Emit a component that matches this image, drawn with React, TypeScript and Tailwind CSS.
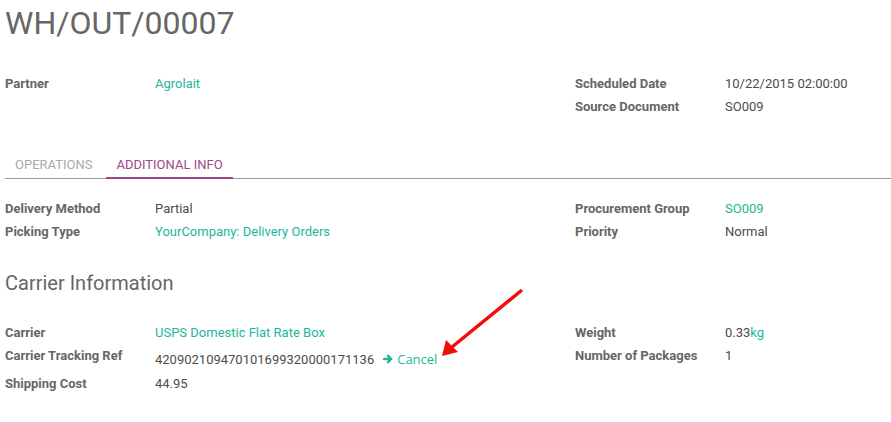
import React from 'react'

const font = { fontFamily: 'Roboto, "Noto Sans", sans-serif' }

type Field = { label: string; value: React.ReactNode; link?: boolean }

function FieldRows({ fields }: { fields: Field[] }) {
  return (
    <div className="grid grid-cols-[150px_1fr] content-start text-[13px] leading-[23px]">
      {fields.map(f => (
        <React.Fragment key={f.label}>
          <div className="font-bold text-[#666666]">{f.label}</div>
          <div className={f.link ? 'text-[#21b799]' : 'text-[#4c4c4c]'}>{f.value}</div>
        </React.Fragment>
      ))}
    </div>
  )
}

function Group({ left, right }: { left: Field[]; right: Field[] }) {
  return (
    <div className="grid grid-cols-[570px_1fr] items-start">
      <FieldRows fields={left} />
      <FieldRows fields={right} />
    </div>
  )
}

export default function App() {
  return (
    <div className="relative w-[891px] h-[422px] bg-white pl-[5px] overflow-hidden" style={font}>
      <h1 className="text-[32px] leading-[46px] text-[#666666] font-normal">WH/OUT/00007</h1>

      <div className="mt-[26px]">
        <Group
          left={[{ label: 'Partner', value: 'Agrolait', link: true }]}
          right={[
            { label: 'Scheduled Date', value: '10/22/2015 02:00:00' },
            { label: 'Source Document', value: 'SO009' },
          ]}
        />
      </div>

      <div className="mt-[37px] flex border-b border-[#999999] text-[13px]">
        <div className="pl-[10px] pr-[11px] mr-[3px] pb-[3px] text-[#aaaaaa]">OPERATIONS</div>
        <div className="px-[10px] pb-[2px] text-[#a24689] border-b-2 border-[#a24689] -mb-px">ADDITIONAL INFO</div>
      </div>

      <div className="mt-[18px]">
        <Group
          left={[
            { label: 'Delivery Method', value: 'Partial' },
            { label: 'Picking Type', value: 'YourCompany: Delivery Orders', link: true },
          ]}
          right={[
            { label: 'Procurement Group', value: 'SO009', link: true },
            { label: 'Priority', value: 'Normal' },
          ]}
        />
      </div>

      <h2 className="mt-[27px] text-[20px] leading-[26px] text-[#666666] font-normal">Carrier Information</h2>

      <div className="mt-[25px]">
        <Group
          left={[
            { label: 'Carrier', value: 'USPS Domestic Flat Rate Box', link: true },
            {
              label: 'Carrier Tracking Ref',
              value: (
                <div className="flex items-center pt-[4px] pb-[1px]">
                  420902109470101699320000171136
                  <span
                    className="ml-[9px] inline-flex items-center gap-[4px] text-[#21b799]"
                    style={{ fontFamily: '"Open Sans", sans-serif' }}
                  >
                    <svg width="10" height="10" viewBox="0 0 10 10">
                      <path
                        d="M1 5H8M5 1.8L8.3 5L5 8.2"
                        fill="none"
                        stroke="#21b799"
                        strokeWidth="2.4"
                        strokeLinecap="round"
                        strokeLinejoin="round"
                      />
                    </svg>
                    Cancel
                  </span>
                </div>
              ),
            },
            { label: 'Shipping Cost', value: '44.95' },
          ]}
          right={[
            {
              label: 'Weight',
              value: (
                <>
                  0.33<span className="text-[#21b799]">kg</span>
                </>
              ),
            },
            { label: 'Number of Packages', value: '1' },
          ]}
        />
      </div>

      <svg className="absolute left-0 top-0 pointer-events-none" width="891" height="422">
        <line x1="522" y1="290" x2="452" y2="347" stroke="#f20c0c" strokeWidth="3.5" />
        <path d="M442 356 L446 340 L458 352 Z" fill="#f20c0c" />
      </svg>
    </div>
  )
}
